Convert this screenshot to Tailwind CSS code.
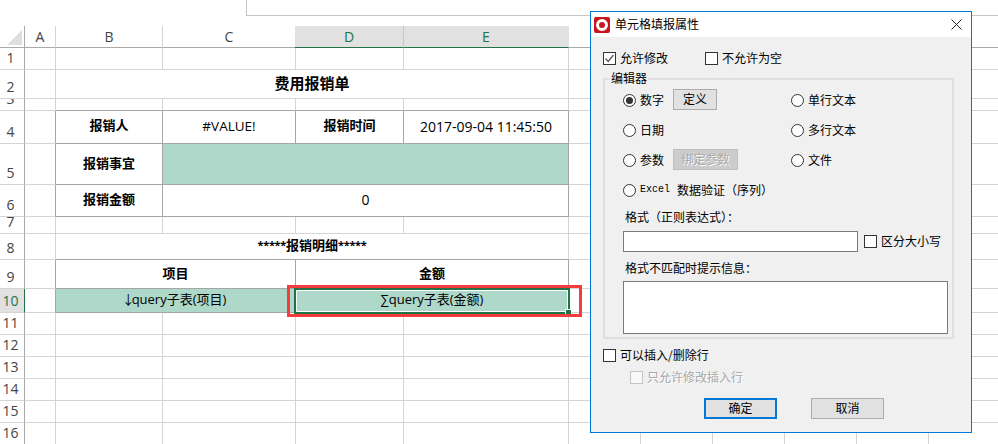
<!DOCTYPE html>
<html>
<head>
<meta charset="utf-8">
<script src="https://cdn.jsdelivr.net/npm/@tailwindcss/browser@4"></script>
</head>
<body class="bg-white">
<div class="relative w-[998px] h-[444px] overflow-hidden font-['Open_Sans','Noto_Sans_CJK_SC',sans-serif] text-black">
  <!-- formula bar remnant -->
  <div class="h-[26px] pl-[246px]"><div class="h-[16px] border-l border-b border-[#c6c6c6]"></div></div>

  <!-- sheet -->
  <div class="grid w-[1001px] grid-cols-[25px_31px_107px_133px_108px_165px_72px_72px_72px_72px_72px_72px] grid-rows-[22px_22px_29px_12px_33px_41px_32px_17px_26px_29px_24px_22px_22px_22px_22px_22px_22px] [&>*]:border-r [&>*]:border-b [&>*]:border-[#d4d4d4] text-[14px]">
    <!-- header -->
    <div class="border-b-[#a9a9a9]! border-r-[#a9a9a9]! relative"><svg class="absolute left-[7px] top-[4px]" width="15" height="15" viewBox="0 0 15 15"><polygon points="15,0 15,15 0,15" fill="#dfdfdf"/></svg></div>
    <div class="border-b-[#a9a9a9]! flex items-center justify-center text-[#444]">A</div>
    <div class="border-b-[#a9a9a9]! flex items-center justify-center text-[#444]">B</div>
    <div class="border-b-[#a9a9a9]! flex items-center justify-center text-[#444]">C</div>
    <div class="-ml-px bg-[#e1e1e1] border-b-2 border-b-[#217346]! border-r-[#c6c6c6]! flex items-center justify-center text-[#217346]">D</div>
    <div class="bg-[#e1e1e1] border-b-2 border-b-[#217346]! border-r-[#e1e1e1]! flex items-center justify-center text-[#217346]">E</div>
    <div class="border-b-[#a9a9a9]!"></div><div class="border-b-[#a9a9a9]!"></div><div class="border-b-[#a9a9a9]!"></div><div class="border-b-[#a9a9a9]!"></div><div class="border-b-[#a9a9a9]!"></div><div class="border-b-[#a9a9a9]!"></div>

    <!-- 1 -->
    <div class="border-r-[#a9a9a9]! overflow-hidden flex items-end justify-center pr-[3px] leading-[22px] text-[#444]">1</div>
    <div></div><div></div><div></div><div></div><div></div><div></div><div></div><div></div><div></div><div></div><div></div>
    <!-- 2 -->
    <div class="border-r-[#a9a9a9]! overflow-hidden flex items-end justify-center pr-[3px] leading-[22px] text-[#444]">2</div>
    <div></div>
    <div class="col-span-4 flex items-center justify-center pb-[2px] text-[15px] font-bold">费用报销单</div>
    <div></div><div></div><div></div><div></div><div></div><div></div>
    <!-- 3 -->
    <div class="border-r-[#a9a9a9]! overflow-hidden flex items-end justify-center pr-[3px] leading-[22px] text-[#444]">3</div>
    <div></div>
    <div class="border-b-[#a6a6a6]!"></div><div class="border-b-[#a6a6a6]!"></div><div class="border-b-[#a6a6a6]!"></div><div class="border-b-[#a6a6a6]!"></div>
    <div></div><div></div><div></div><div></div><div></div><div></div>
    <!-- 4 -->
    <div class="border-r-[#a9a9a9]! overflow-hidden flex items-end justify-center pr-[3px] leading-[22px] text-[#444]">4</div>
    <div class="border-r-[#a6a6a6]!"></div>
    <div class="border-b-[#a6a6a6]! border-r-[#a6a6a6]! flex items-center justify-center pb-[2px] text-[13px] font-bold">报销人</div>
    <div class="border-b-[#a6a6a6]! border-r-[#a6a6a6]! flex items-center justify-center pb-[2px] text-[13.5px]">#VALUE!</div>
    <div class="border-b-[#a6a6a6]! border-r-[#a6a6a6]! flex items-center justify-center pb-[2px] text-[13px] font-bold">报销时间</div>
    <div class="border-b-[#a6a6a6]! border-r-[#a6a6a6]! flex items-center justify-center pb-[2px]">2017-09-04 11:45:50</div>
    <div></div><div></div><div></div><div></div><div></div><div></div>
    <!-- 5 -->
    <div class="border-r-[#a9a9a9]! overflow-hidden flex items-end justify-center pr-[3px] leading-[22px] text-[#444]">5</div>
    <div class="border-r-[#a6a6a6]!"></div>
    <div class="border-b-[#a6a6a6]! border-r-[#a6a6a6]! flex items-center justify-center text-[13px] font-bold">报销事宜</div>
    <div class="col-span-3 bg-[#aed8ca] border-b-[#a6a6a6]! border-r-[#a6a6a6]!"></div>
    <div></div><div></div><div></div><div></div><div></div><div></div>
    <!-- 6 -->
    <div class="border-r-[#a9a9a9]! overflow-hidden flex items-end justify-center pr-[3px] leading-[22px] text-[#444]">6</div>
    <div class="border-r-[#a6a6a6]!"></div>
    <div class="border-b-[#a6a6a6]! border-r-[#a6a6a6]! flex items-center justify-center pb-[2px] text-[13px] font-bold">报销金额</div>
    <div class="col-span-3 border-b-[#a6a6a6]! border-r-[#a6a6a6]! flex items-center justify-center pb-[2px] text-[14px]">0</div>
    <div></div><div></div><div></div><div></div><div></div><div></div>
    <!-- 7 -->
    <div class="border-r-[#a9a9a9]! overflow-hidden flex items-end justify-center pr-[3px] leading-[22px] text-[#444]">7</div>
    <div></div><div></div><div></div><div></div><div></div><div></div><div></div><div></div><div></div><div></div><div></div>
    <!-- 8 -->
    <div class="border-r-[#a9a9a9]! overflow-hidden flex items-end justify-center pr-[3px] leading-[22px] text-[#444]">8</div>
    <div></div>
    <div class="col-span-4 border-b-[#a6a6a6]! flex items-center justify-center pb-[2px] text-[13px] font-bold"><span class="text-[11px] tracking-[-0.3px]">*****</span>报销明细<span class="text-[11px] tracking-[-0.3px]">*****</span></div>
    <div></div><div></div><div></div><div></div><div></div><div></div>
    <!-- 9 -->
    <div class="border-r-[#a9a9a9]! overflow-hidden flex items-end justify-center pr-[3px] leading-[22px] text-[#444]">9</div>
    <div class="border-r-[#a6a6a6]!"></div>
    <div class="col-span-2 border-b-[#a6a6a6]! border-r-[#a6a6a6]! flex items-center justify-center text-[13px] font-bold">项目</div>
    <div class="col-span-2 border-b-[#a6a6a6]! border-r-[#a6a6a6]! flex items-center justify-center text-[13px] font-bold">金额</div>
    <div></div><div></div><div></div><div></div><div></div><div></div>
    <!-- 10 -->
    <div class="bg-[#e1e1e1] border-r-2 border-r-[#217346]! overflow-hidden flex items-end justify-center pr-[3px] leading-[22px] text-[#217346]">10</div>
    <div class="border-r-[#a6a6a6]!"></div>
    <div class="col-span-2 bg-[#aed8ca] border-b-[#a6a6a6]! border-r-[#a6a6a6]! flex items-center justify-center pb-[2px] text-[13px]"><span class="-mx-[3px]">↓</span><span>query子表(项目)</span></div>
    <div class="relative col-span-2 bg-[#aed8ca] border-b-[#a6a6a6]! border-r-[#a6a6a6]! flex items-center justify-center pb-[2px] text-[13px]">∑query子表(金额)
      <div class="absolute -left-[2px] -top-px -right-[2px] -bottom-[2px] border-2 border-[#217346]"><div class="h-full border border-white"></div></div>
      <div class="absolute -right-[3px] -bottom-[3px] w-[6px] h-[6px] bg-[#217346] border border-white border-r-0 border-b-0"></div>
      <div class="absolute -left-[9px] -top-[4px] w-[295px] h-[32px] border-[3px] border-[#f53b3b]"></div>
    </div>
    <div></div><div></div><div></div><div></div><div></div><div></div>
    <!-- 11-16 -->
    <div class="border-r-[#a9a9a9]! overflow-hidden flex items-end justify-center pr-[3px] leading-[22px] text-[#444]">11</div>
    <div></div><div></div><div></div><div></div><div></div><div></div><div></div><div></div><div></div><div></div><div></div>
    <div class="border-r-[#a9a9a9]! overflow-hidden flex items-end justify-center pr-[3px] leading-[22px] text-[#444]">12</div>
    <div></div><div></div><div></div><div></div><div></div><div></div><div></div><div></div><div></div><div></div><div></div>
    <div class="border-r-[#a9a9a9]! overflow-hidden flex items-end justify-center pr-[3px] leading-[22px] text-[#444]">13</div>
    <div></div><div></div><div></div><div></div><div></div><div></div><div></div><div></div><div></div><div></div><div></div>
    <div class="border-r-[#a9a9a9]! overflow-hidden flex items-end justify-center pr-[3px] leading-[22px] text-[#444]">14</div>
    <div></div><div></div><div></div><div></div><div></div><div></div><div></div><div></div><div></div><div></div><div></div>
    <div class="border-r-[#a9a9a9]! overflow-hidden flex items-end justify-center pr-[3px] leading-[22px] text-[#444]">15</div>
    <div></div><div></div><div></div><div></div><div></div><div></div><div></div><div></div><div></div><div></div><div></div>
    <div class="border-r-[#a9a9a9]! overflow-hidden flex items-end justify-center pr-[3px] leading-[22px] text-[#444]">16</div>
    <div></div><div></div><div></div><div></div><div></div><div></div><div></div><div></div><div></div><div></div><div></div>
  </div>

  <!-- dialog -->
  <div class="absolute left-[590px] top-[11px] w-[382px] h-[422px] border border-[#0078d7] bg-[#f0f0f0] font-['Noto_Sans_CJK_SC',sans-serif] text-[12px] leading-none text-black [&_span]:-translate-y-px">
    <div class="h-[25px] bg-white flex items-center pl-[3px]">
      <div class="w-[16px] h-[16px] rounded-[2px] bg-[#c9151e] flex items-center justify-center"><div class="w-[12px] h-[12px] rounded-full border-[3px] border-white bg-[#c9151e]"></div></div>
      <span class="ml-[5px]">单元格填报属性</span>
      <svg class="ml-auto mr-[9px]" width="11" height="11" viewBox="0 0 11 11"><path d="M0.5 0.5L10.5 10.5M10.5 0.5L0.5 10.5" stroke="#222" stroke-width="1" fill="none"/></svg>
    </div>
    <div class="px-[12px]">
      <div class="mt-[15px] h-[13px] flex items-center">
        <div class="w-[13px] h-[13px] border border-[#333] bg-white flex items-center justify-center"><svg width="11" height="11" viewBox="0 0 11 11"><path d="M1.5 5.5L4.2 8.5L9.5 2" stroke="#555" stroke-width="1.2" fill="none"/></svg></div>
        <span class="ml-[4px] w-[85px]">允许修改</span>
        <div class="w-[13px] h-[13px] border border-[#333] bg-white"></div>
        <span class="ml-[4px]">不允许为空</span>
      </div>
      <div class="relative mt-[13px] w-[351px] h-[261px] border-2 border-[#dfdfdf] pl-[18px] pt-[6px]">
        <span class="absolute left-[5px] -top-[8px] bg-[#f0f0f0] px-[1px] leading-[14px]">编辑器</span>
        <div class="grid grid-cols-[168px_1fr] auto-rows-[29px] gap-y-[1px]">
          <div class="flex items-center">
            <div class="w-[13px] h-[13px] rounded-full border border-[#333] bg-white flex items-center justify-center"><div class="w-[7px] h-[7px] rounded-full bg-[#333]"></div></div>
            <span class="ml-[4px]">数字</span>
            <div class="-mt-[2px] ml-[9px] w-[44px] h-[21px] bg-[#e1e1e1] border border-[#adadad] flex items-center justify-center"><span>定义</span></div>
          </div>
          <div class="flex items-center"><div class="w-[13px] h-[13px] rounded-full border border-[#333] bg-white"></div><span class="ml-[4px]">单行文本</span></div>
          <div class="flex items-center"><div class="w-[13px] h-[13px] rounded-full border border-[#333] bg-white"></div><span class="ml-[4px]">日期</span></div>
          <div class="flex items-center"><div class="w-[13px] h-[13px] rounded-full border border-[#333] bg-white"></div><span class="ml-[4px]">多行文本</span></div>
          <div class="flex items-center">
            <div class="w-[13px] h-[13px] rounded-full border border-[#333] bg-white"></div>
            <span class="ml-[4px]">参数</span>
            <div class="-mt-[2px] ml-[9px] w-[65px] h-[21px] bg-[#cccccc] border border-[#bfbfbf] flex items-center justify-center text-[#a8a8a8] [text-shadow:1px_1px_0_#fff]"><span>绑定参数</span></div>
          </div>
          <div class="flex items-center"><div class="w-[13px] h-[13px] rounded-full border border-[#333] bg-white"></div><span class="ml-[4px]">文件</span></div>
          <div class="col-span-2 flex items-center"><div class="w-[13px] h-[13px] rounded-full border border-[#333] bg-white"></div><span class="ml-[4px] font-['Liberation_Mono',monospace] text-[10px]">Excel</span><span class="ml-[7px]">数据验证（序列）</span></div>
        </div>
        <div class="mt-[2px] h-[20px] pl-[2px] flex items-center">格式（正则表达式）：</div>
        <div class="mt-[4px] flex items-center">
          <div class="w-[235px] h-[21px] bg-white border border-[#7a7a7a]"></div>
          <div class="ml-[6px] w-[13px] h-[13px] border border-[#333] bg-white"></div>
          <span class="ml-[4px]">区分大小写</span>
        </div>
        <div class="mt-[6px] h-[20px] pl-[2px] flex items-center">格式不匹配时提示信息：</div>
        <div class="mt-[3px] w-[325px] h-[53px] bg-white border border-[#7a7a7a]"></div>
      </div>
      <div class="mt-[10px] h-[13px] flex items-center">
        <div class="w-[13px] h-[13px] border border-[#333] bg-white"></div>
        <span class="ml-[4px]">可以插入/删除行</span>
      </div>
      <div class="mt-[9px] ml-[27px] h-[13px] flex items-center">
        <div class="w-[13px] h-[13px] border border-[#c4c4c4] bg-[#f8f8f8]"></div>
        <span class="ml-[4px] text-[#a8a8a8] [text-shadow:1px_1px_0_#fff]">只允许修改插入行</span>
      </div>
      <div class="mt-[14px] ml-[101px] flex gap-[34px]">
        <div class="w-[73px] h-[21px] bg-[#e1e1e1] border-2 border-[#0078d7] flex items-center justify-center"><span>确定</span></div>
        <div class="w-[73px] h-[21px] bg-[#e1e1e1] border border-[#adadad] flex items-center justify-center"><span>取消</span></div>
      </div>
    </div>
  </div>
</div>
</body>
</html>
